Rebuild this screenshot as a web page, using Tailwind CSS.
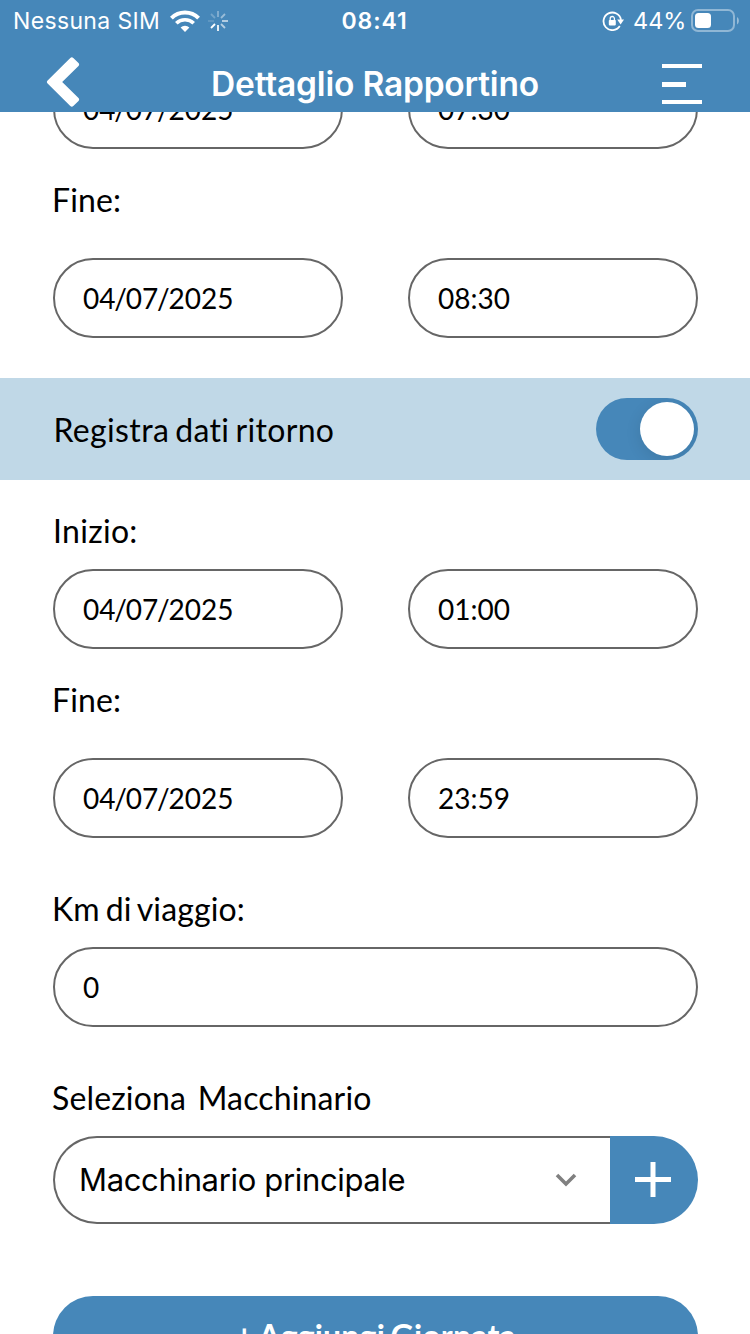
<!DOCTYPE html>
<html lang="it">
<head>
  <meta charset="UTF-8">
  <meta name="viewport" content="width=device-width, initial-scale=1.0">
  <script src="https://cdn.jsdelivr.net/npm/@tailwindcss/browser@4"></script>
  <title>Dettaglio Rapportino</title>
</head>

<body class="h-[1334px] overflow-hidden bg-white text-black font-['Lato',sans-serif]">

    <!--Header-->
    <header class="relative z-10 h-28 bg-[#4687b9] text-white font-['Inter',sans-serif]">

        <!--Status bar-->
        <div class="grid grid-cols-3 items-center h-10 pl-[13px] pr-[11px] text-[23px] leading-10">
            <div class="flex items-center">
                <span class="w-[157px] pt-px whitespace-nowrap tracking-[0.35px]">Nessuna SIM</span>
                <svg class="w-[30px] h-[22px] shrink-0" viewBox="0 0 30 22" fill="none" stroke="#fff">
                    <path d="M1.4 8.2a19.2 19.2 0 0 1 27.2 0" stroke-width="4"/>
                    <path d="M6.3 13.3a12.3 12.3 0 0 1 17.4 0" stroke-width="3.6"/>
                    <path d="M15 22l-4.4-4.5a6.2 6.2 0 0 1 8.8 0z" fill="#fff" stroke="none"/>
                </svg>
                <svg class="ml-2 w-5 h-5 shrink-0" viewBox="0 0 20 20" stroke="#fff" stroke-width="1.8">
                    <path d="M10 0v6" opacity=".35"/>
                    <path d="M17 3l-4 4" opacity=".45"/>
                    <path d="M20 10h-6" opacity=".65"/>
                    <path d="M17 17l-4-4" opacity=".6"/>
                    <path d="M10 20v-6" opacity=".95"/>
                    <path d="M3 17l4-4"/>
                    <path d="M0 10h6" opacity=".15"/>
                    <path d="M3 3l4 4" opacity=".25"/>
                </svg>
            </div>
            <div class="pt-px pr-[3px] text-center font-semibold tracking-[0.9px]">08:41</div>
            <div class="flex items-center justify-end">
                <svg class="w-[22px] h-5 shrink-0" viewBox="0 0 22 20" fill="none" stroke="#fff">
                    <path d="M17.8 15A8.8 8.8 0 1 1 19 8.8" stroke-width="1.8"/>
                    <path d="M15.2 8.4h6.8l-3.4 5z" fill="#fff" stroke="none"/>
                    <rect x="6.8" y="9" width="7" height="5.4" rx="0.8" fill="#fff" stroke="none"/>
                    <path d="M8.2 9.5V7.6a2.1 2.1 0 0 1 4.2 0v1.9" stroke-width="1.3"/>
                </svg>
                <span class="ml-[9px] w-[58px] pt-px text-[23.5px] whitespace-nowrap">44%</span>
                <svg class="w-12 h-[23px] shrink-0" viewBox="0 0 48 23">
                    <rect x="1" y="1" width="42" height="21" rx="6" fill="none" stroke="#fff" stroke-width="2" opacity=".4"/>
                    <rect x="4" y="4" width="16" height="15" rx="3.5" fill="#fff"/>
                    <path d="M46 8c2.5 1.5 2.5 6 0 7.5z" fill="#fff" opacity=".45"/>
                </svg>
            </div>
        </div>

        <!--Title bar-->
        <div class="flex justify-between h-[72px] pl-[46px] pr-12">
            <svg class="mt-[17px] w-[34px] h-[50px]" viewBox="0 0 34 50" fill="#fff">
                <path d="M1.6 23.5L24.3 .9q1.5-1.400 3 0l5.200 5.200q1.300 1.500 0 3L16.200 25l16.300 15.900q1.300 1.500 0 3l-5.200 5.200q-1.500 1.400-3 0L1.600 26.500q-1.500-1.500 0-3z"/>
            </svg>
            <h1 class="mt-6 pl-2 text-[33.5px] leading-[41px] font-semibold tracking-[-0.2px] whitespace-nowrap">Dettaglio Rapportino</h1>
            <div class="flex flex-col justify-between mt-6 w-10 h-10">
                <span class="h-1 w-10 bg-white"></span>
                <span class="h-[5px] w-6 bg-white"></span>
                <span class="h-1 w-10 bg-white"></span>
            </div>
        </div>
    </header>

    <!--The form is scrolled, its first row goes under the header-->
    <main class="-mt-[43px] text-[32px] leading-10 tracking-[0.15px] [word-spacing:-2.5px] [font-variant-ligatures:none]">
        <section class="pl-[53px] pr-[52px]">
            <div class="flex justify-between text-[28px] tracking-normal">
                <div class="flex items-center w-[290px] h-20 pl-7 pb-px rounded-full border-2 border-[#666]">04<span class="-mx-[1.2px]">/</span>07<span class="-mx-[1.2px]">/</span>2025</div>
                <div class="flex items-center w-[290px] h-20 pl-7 pb-px rounded-full border-2 border-[#666]">07:30</div>
            </div>
            <p class="mt-[31px] mb-[38px] -ml-px">Fine:</p>
            <div class="flex justify-between text-[28px] tracking-normal">
                <div class="flex items-center w-[290px] h-20 pl-7 pb-px rounded-full border-2 border-[#666]">04<span class="-mx-[1.2px]">/</span>07<span class="-mx-[1.2px]">/</span>2025</div>
                <div class="flex items-center w-[290px] h-20 pl-7 pb-px rounded-full border-2 border-[#666]">08:30</div>
            </div>
        </section>

        <!--Return data switch-->
        <section class="flex items-center justify-between mt-10 h-[102px] pl-[53.5px] pr-[52px] bg-[#c0d8e7]">
            <span class="pt-px tracking-[0.35px]">Registra dati ritorno</span>
            <div class="flex items-center justify-end w-[102px] h-[62px] pr-1 rounded-full bg-[#4687b9] overflow-hidden">
                <div class="size-[54px] rounded-full bg-white shadow-[0_4px_16px_rgba(0,0,0,0.1)]"></div>
            </div>
        </section>

        <section class="pl-[53px] pr-[52px]">
            <p class="mt-[31px] mb-[18px] tracking-[0.3px]">Inizio:</p>
            <div class="flex justify-between text-[28px] tracking-normal">
                <div class="flex items-center w-[290px] h-20 pl-7 pb-px rounded-full border-2 border-[#666]">04<span class="-mx-[1.2px]">/</span>07<span class="-mx-[1.2px]">/</span>2025</div>
                <div class="flex items-center w-[290px] h-20 pl-7 pb-px rounded-full border-2 border-[#666]">01:00</div>
            </div>
            <p class="mt-[31px] mb-[38px] -ml-px">Fine:</p>
            <div class="flex justify-between text-[28px] tracking-normal">
                <div class="flex items-center w-[290px] h-20 pl-7 pb-px rounded-full border-2 border-[#666]">04<span class="-mx-[1.2px]">/</span>07<span class="-mx-[1.2px]">/</span>2025</div>
                <div class="flex items-center w-[290px] h-20 pl-7 pb-px rounded-full border-2 border-[#666]">23:59</div>
            </div>

            <p class="mt-[51px] mb-[18px] -ml-px">Km di viaggio:</p>
            <div class="flex items-center h-20 pl-7 rounded-full border-2 border-[#666] text-[28px]">0</div>

            <!--Machine select-->
            <p class="mt-[51px] mb-[18px] -ml-px whitespace-pre">Seleziona  Macchinario</p>
            <div class="flex h-[88px]">
                <div class="flex items-center justify-between w-[557px] pl-6 pr-[33px] rounded-l-full border-2 border-r-0 border-[#666]">
                    <span class="font-['Inter',sans-serif] text-[31px] tracking-[-0.34px] [word-spacing:0] whitespace-nowrap">Macchinario principale</span>
                    <svg class="w-[22px] h-[14px]" viewBox="0 0 22 14" fill="none" stroke="#808080" stroke-width="3.6">
                        <path d="M2 2l9 9 9-9"/>
                    </svg>
                </div>
                <div class="flex items-center w-[88px] pl-[25px] rounded-r-full bg-[#4687b9]">
                    <svg class="w-9 h-9" viewBox="0 0 36 36" stroke="#fff" stroke-width="5">
                        <path d="M18 0v35M0 17.5h36"/>
                    </svg>
                </div>
            </div>

            <!--Add day button-->
            <div class="mt-[72px] h-20 pt-5 rounded-full bg-[#4687b9] text-white text-center font-bold tracking-[0.2px]">+ Aggiungi Giornata</div>
        </section>
    </main>
</body>
</html>
